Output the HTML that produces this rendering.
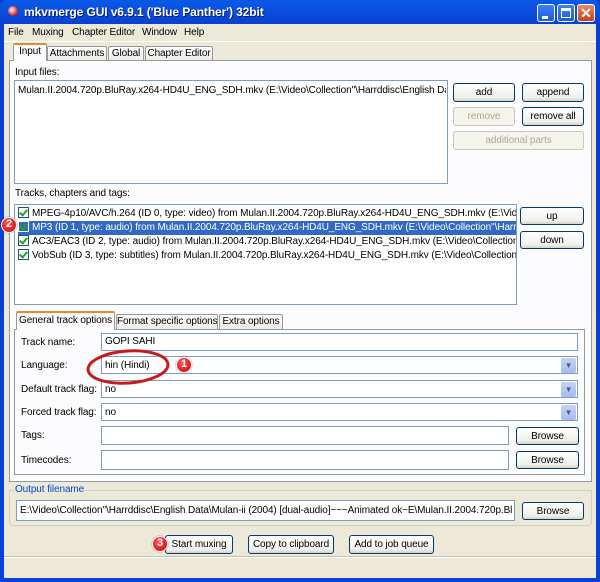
<!DOCTYPE html>
<html><head><meta charset="utf-8"><style>
*{margin:0;padding:0;box-sizing:border-box}
body{width:600px;height:582px;overflow:hidden;font-family:"Liberation Sans",sans-serif;font-size:10px;letter-spacing:-0.1px;color:#000;background:#0a3fd0;position:relative;white-space:nowrap}
.a{position:absolute}
.frame{left:0;top:0;width:600px;height:582px;background:linear-gradient(#0a5ae8,#0a3fd0 25px,#0842d6);border-radius:7px 7px 0 0}
.client{left:4px;top:24px;width:592px;height:554px;background:#ECE9D8}
.btn{position:absolute;border:1px solid #003c74;border-radius:3px;background:linear-gradient(#fff,#f0f0ea 80%,#d6d0c5);text-align:center;line-height:18px}
.dis{border-color:#cac8bb;color:#aca899;background:#f5f4ea}
.box{position:absolute;background:#fff;border:1px solid #7f9db9;overflow:hidden}
.tab{position:absolute;border:1px solid #919b9c;border-bottom:none;background:linear-gradient(#fff,#ecebe5);text-align:center;line-height:16px;border-radius:2px 2px 0 0;overflow:hidden}
.row{position:absolute;left:3px;height:14px;line-height:14px;overflow:hidden;width:498px}
.cb{display:inline-block;width:11px;height:11px;border:1px solid #1c5180;background:#fff;vertical-align:-2px;margin-right:3px;position:relative}
.cb:after{content:"";position:absolute;left:2px;top:0;width:3px;height:6px;border:solid #21a121;border-width:0 2px 2px 0;transform:rotate(40deg)}
.lbl{position:absolute;left:21px}
.dd{position:absolute;right:1px;top:1px;width:15px;height:15px;background:linear-gradient(#c6d3f7,#a6bbf0);border-radius:2px;color:#4d6185;font-size:8px;text-align:center;line-height:15px}
.badge{position:absolute;width:16px;height:16px;border-radius:50%;background:radial-gradient(circle at 40% 35%,#f55,#c00);border:1.5px solid #fff;box-shadow:0 0 1px #600;color:#fff;font-weight:bold;font-size:11px;text-align:center;line-height:13px;letter-spacing:0}
</style></head><body>
<div class="a frame"></div>
<div class="a" style="left:8px;top:6px;width:10px;height:10px;border-radius:50%;background:radial-gradient(circle at 40% 40%,#fff,#c33 60%,#800)"></div>
<div class="a" style="left:24px;top:5px;color:#fff;font-weight:bold;font-size:12px;letter-spacing:-0.1px;text-shadow:1px 1px #0a1e6e">mkvmerge GUI v6.9.1 ('Blue Panther') 32bit</div>
<div class="a" style="left:537px;top:4px;width:18px;height:18px;border:1px solid #fff;border-radius:3px;background:linear-gradient(#3c81f3,#1d5de0)"><div class="a" style="left:4px;top:11px;width:6px;height:3px;background:#fff"></div></div>
<div class="a" style="left:557px;top:4px;width:18px;height:18px;border:1px solid #fff;border-radius:3px;background:linear-gradient(#3c81f3,#1d5de0)"><div class="a" style="left:3px;top:3px;width:10px;height:10px;border:1px solid #fff;border-top-width:3px"></div></div>
<div class="a" style="left:577px;top:4px;width:18px;height:18px;border:1px solid #fff;border-radius:3px;background:linear-gradient(#e88a6a,#c7421c);color:#fff;font-weight:bold;font-size:14px;text-align:center;line-height:16px">✕</div>
<div class="a client"></div>
<div class="a" style="left:8px;top:27px">File</div>
<div class="a" style="left:32px;top:27px">Muxing</div>
<div class="a" style="left:72px;top:27px">Chapter Editor</div>
<div class="a" style="left:142px;top:27px">Window</div>
<div class="a" style="left:184px;top:27px">Help</div>
<div class="a" style="left:4px;top:41px;width:592px;height:1px;background:#fff"></div>
<div class="a" style="left:9px;top:60px;width:583px;height:422px;background:#fcfcfe;border:1px solid #919b9c"></div>
<div class="tab" style="left:13px;top:43px;width:34px;height:18px;background:#fcfcfe;border-top:2px solid #e68b2c;line-height:14px">Input</div>
<div class="tab" style="left:47px;top:46px;width:60px;height:14px;line-height:13px">Attachments</div>
<div class="tab" style="left:108px;top:46px;width:36px;height:14px;line-height:13px">Global</div>
<div class="tab" style="left:145px;top:46px;width:68px;height:14px;line-height:13px">Chapter Editor</div>
<div class="a" style="left:15px;top:67px">Input files:</div>
<div class="box" style="left:14px;top:80px;width:434px;height:104px"><div class="a" style="left:3px;top:4px;width:428px;overflow:hidden">Mulan.II.2004.720p.BluRay.x264-HD4U_ENG_SDH.mkv (E:\Video\Collection''\Harrddisc\English Data\Mulan</div></div>
<div class="btn" style="left:453px;top:83px;width:62px;height:19px">add</div>
<div class="btn" style="left:522px;top:83px;width:62px;height:19px">append</div>
<div class="btn dis" style="left:453px;top:107px;width:62px;height:19px">remove</div>
<div class="btn" style="left:522px;top:107px;width:62px;height:19px">remove all</div>
<div class="btn dis" style="left:453px;top:131px;width:131px;height:19px">additional parts</div>
<div class="a" style="left:15px;top:188px">Tracks, chapters and tags:</div>
<div class="box" style="left:14px;top:204px;width:503px;height:101px">
<div class="row" style="top:2px"><span class="cb"></span>MPEG-4p10/AVC/h.264 (ID 0, type: video) from Mulan.II.2004.720p.BluRay.x264-HD4U_ENG_SDH.mkv (E:\Video\Collection</div>
<div class="row" style="top:16px;background:#316ac5;color:#fff"><span class="cb" style="border-color:#fff;background:#316ac5"></span>MP3 (ID 1, type: audio) from Mulan.II.2004.720p.BluRay.x264-HD4U_ENG_SDH.mkv (E:\Video\Collection''\Harrddisc\English</div>
<div class="row" style="top:30px"><span class="cb"></span>AC3/EAC3 (ID 2, type: audio) from Mulan.II.2004.720p.BluRay.x264-HD4U_ENG_SDH.mkv (E:\Video\Collection''\Harrddisc</div>
<div class="row" style="top:44px"><span class="cb"></span>VobSub (ID 3, type: subtitles) from Mulan.II.2004.720p.BluRay.x264-HD4U_ENG_SDH.mkv (E:\Video\Collection''\Harrddisc</div>
</div>
<div class="btn" style="left:520px;top:207px;width:64px;height:18px;line-height:17px">up</div>
<div class="btn" style="left:520px;top:231px;width:64px;height:18px;line-height:17px">down</div>
<div class="a" style="left:14px;top:329px;width:571px;height:146px;background:#fcfcfe;border:1px solid #919b9c"></div>
<div class="tab" style="left:16px;top:311px;width:99px;height:19px;background:#fcfcfe;border-top:2px solid #e68b2c;line-height:15px">General track options</div>
<div class="tab" style="left:116px;top:314px;width:102px;height:15px;line-height:14px">Format specific options</div>
<div class="tab" style="left:219px;top:314px;width:64px;height:15px;line-height:14px">Extra options</div>
<div class="lbl" style="top:337px">Track name:</div>
<div class="box" style="left:101px;top:333px;width:477px;height:18px"><div class="a" style="left:3px;top:2px">GOPI SAHI</div></div>
<div class="lbl" style="top:360px">Language:</div>
<div class="box" style="left:101px;top:356px;width:477px;height:18px"><div class="a" style="left:3px;top:3px">hin (Hindi)</div><div class="dd">&#9660;</div></div>
<div class="lbl" style="top:384px">Default track flag:</div>
<div class="box" style="left:101px;top:380px;width:477px;height:18px"><div class="a" style="left:3px;top:3px">no</div><div class="dd">&#9660;</div></div>
<div class="lbl" style="top:407px">Forced track flag:</div>
<div class="box" style="left:101px;top:403px;width:477px;height:18px"><div class="a" style="left:3px;top:3px">no</div><div class="dd">&#9660;</div></div>
<div class="lbl" style="top:430px">Tags:</div>
<div class="box" style="left:101px;top:426px;width:408px;height:19px"></div>
<div class="btn" style="left:516px;top:427px;width:63px;height:18px;line-height:17px">Browse</div>
<div class="lbl" style="top:455px">Timecodes:</div>
<div class="box" style="left:101px;top:450px;width:408px;height:20px"></div>
<div class="btn" style="left:516px;top:451px;width:63px;height:18px;line-height:17px">Browse</div>
<div class="a" style="left:9px;top:490px;width:583px;height:36px;border:1px solid #d0d0bf;border-top:none;border-radius:0 0 4px 4px"></div>
<div class="a" style="left:9px;top:490px;width:5px;height:1px;background:#d0d0bf"></div>
<div class="a" style="left:84px;top:490px;width:508px;height:1px;background:#d0d0bf"></div>
<div class="a" style="left:15px;top:484px;color:#0046d5">Output filename</div>
<div class="box" style="left:16px;top:500px;width:499px;height:21px"><div class="a" style="left:3px;top:4px;overflow:hidden;width:492px">E:\Video\Collection''\Harrddisc\English Data\Mulan-ii (2004) [dual-audio]~~~Animated ok~E\Mulan.II.2004.720p.BluRay.x</div></div>
<div class="btn" style="left:522px;top:502px;width:62px;height:18px;line-height:17px">Browse</div>
<div class="btn" style="left:165px;top:535px;width:68px;height:19px">Start muxing</div>
<div class="btn" style="left:248px;top:535px;width:86px;height:19px">Copy to clipboard</div>
<div class="btn" style="left:349px;top:535px;width:85px;height:19px">Add to job queue</div>
<div class="a" style="left:4px;top:556px;width:592px;height:1px;background:#c5c2b2"></div>
<div class="a" style="left:4px;top:557px;width:592px;height:1px;background:#fff"></div>
<svg class="a" style="left:0;top:0" width="600" height="582"><ellipse cx="128" cy="367" rx="40" ry="16" fill="none" stroke="#c51b1b" stroke-width="3" transform="rotate(-4 128 367)"/></svg>
<div class="badge" style="left:176px;top:357px">1</div>
<div class="badge" style="left:1px;top:217px">2</div>
<div class="badge" style="left:152px;top:536px">3</div>
</body></html>
